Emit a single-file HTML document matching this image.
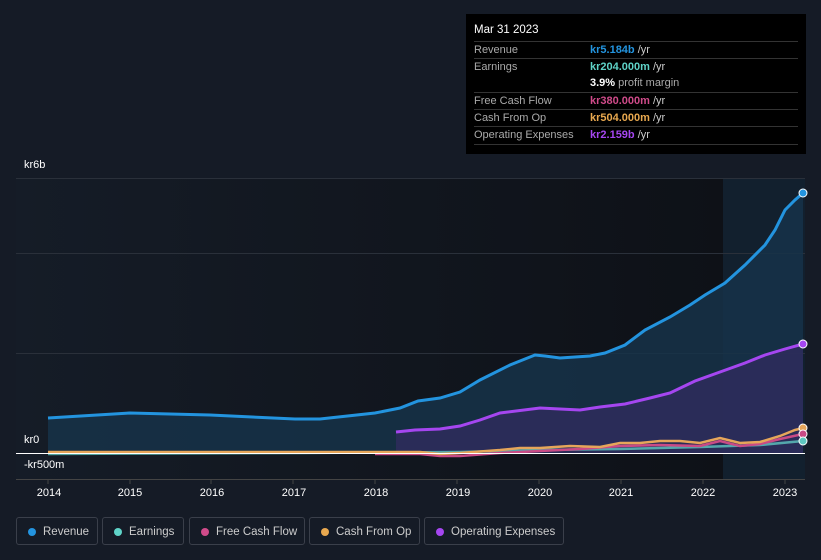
<!DOCTYPE html>
<html><head><style>
body{margin:0;width:821px;height:560px;background:#151b26;font-family:"Liberation Sans",sans-serif;overflow:hidden;position:relative}
.tt{position:absolute;left:466px;top:14px;width:340px;height:140px;background:#000;color:#fff;font-size:11px}
.tt .h{position:absolute;left:8px;top:10px;font-size:11.5px}
.row{position:absolute;left:8px;width:324px;border-top:1px solid #333;height:17px;line-height:17px;color:#aaa}
.row span{position:absolute;left:116px}
.leg{position:absolute;top:517px;height:28px;border:1px solid #3a3f4a;border-radius:3px;color:#ccc;font-size:11.5px;line-height:28px;box-sizing:border-box;padding-left:26px}
.leg i{position:absolute;left:11px;top:10px;width:8px;height:8px;border-radius:50%}
.ax{position:absolute;color:#fff;font-size:11px}
</style></head><body>
<svg width="821" height="560" style="position:absolute;left:0;top:0">
<defs>
<linearGradient id="bg" x1="0" x2="1"><stop offset="0" stop-color="#151c27"/><stop offset="1" stop-color="#0e1117"/></linearGradient>
<linearGradient id="rv" x1="0" y1="0" x2="0" y2="1"><stop offset="0" stop-color="#1c5e8c" stop-opacity=".7"/><stop offset="1" stop-color="#1a3a55" stop-opacity=".5"/></linearGradient>
</defs>
<rect x="16" y="178" width="707" height="302" fill="url(#bg)"/>
<rect x="723" y="178" width="82" height="302" fill="#12202e"/>
<g stroke="#2a303a" stroke-width="1"><line x1="16" y1="178.5" x2="805" y2="178.5"/><line x1="16" y1="253.5" x2="805" y2="253.5"/><line x1="16" y1="353.5" x2="805" y2="353.5"/><line x1="16" y1="479.5" x2="805" y2="479.5" stroke="#444"/></g>
<path d="M48,418 L130,413 L210,415 L295,419 L320,419 L375,413 L400,408 L418,401 L440,398 L460,392 L480,380 L510,365 L535,355 L545,356 L560,358 L590,356 L605,353 L625,345 L645,330 L670,317 L690,305 L705,295 L725,283 L745,265 L765,245 L775,230 L785,210 L795,200 L803,193 L803,453 L48,453Z" fill="#163249" opacity=".85"/>
<path d="M396,432 L415,430 L440,429 L460,426 L480,420 L500,413 L540,408 L560,409 L580,410 L600,407 L625,404 L650,398 L670,393 L695,381 L720,372 L745,363 L765,355 L785,349 L803,344 L803,453 L396,453Z" fill="#2f2c5e" opacity=".8"/>
<path d="M48,418 L130,413 L210,415 L295,419 L320,419 L375,413 L400,408 L418,401 L440,398 L460,392 L480,380 L510,365 L535,355 L545,356 L560,358 L590,356 L605,353 L625,345 L645,330 L670,317 L690,305 L705,295 L725,283 L745,265 L765,245 L775,230 L785,210 L795,200 L803,193" fill="none" stroke="#2394df" stroke-width="3"/>
<path d="M396,432 L415,430 L440,429 L460,426 L480,420 L500,413 L540,408 L560,409 L580,410 L600,407 L625,404 L650,398 L670,393 L695,381 L720,372 L745,363 L765,355 L785,349 L803,344" fill="none" stroke="#a546f0" stroke-width="3"/>
<path d="M48,454 L300,453 L460,452 L540,450 L620,449 L700,447 L760,445 L803,441" fill="none" stroke="#5fc7c0" stroke-width="2.5" opacity=".8"/>
<path d="M375,454 L420,454 L440,456 L460,456 L500,453 L540,451 L580,449 L620,446 L660,445 L700,446 L720,441 L740,446 L760,444 L780,439 L803,434" fill="none" stroke="#c94a85" stroke-width="2.5"/>
<path d="M48,452 L375,452 L420,452 L440,454 L460,453 L500,450 L520,448 L540,448 L570,446 L600,447 L620,443 L640,443 L660,441 L680,441 L700,443 L720,438 L740,443 L760,442 L780,436 L795,430 L803,428" fill="none" stroke="#e6a65a" stroke-width="2.5"/>
<line x1="16" y1="453.5" x2="805" y2="453.5" stroke="#fff" stroke-width="1"/>
<circle cx="803" cy="193" r="4" fill="#2394df" stroke="#fff"/>
<circle cx="803" cy="344" r="4" fill="#a546f0" stroke="#fff"/>
<circle cx="803" cy="428" r="4" fill="#e6a65a" stroke="#fff"/>
<circle cx="803" cy="434" r="4" fill="#c94a85" stroke="#fff"/>
<circle cx="803" cy="441" r="4" fill="#5fc7c0" stroke="#fff"/>
<g stroke="#444"><line x1="48" y1="480" x2="48" y2="484"/><line x1="130" y1="480" x2="130" y2="484"/><line x1="211" y1="480" x2="211" y2="484"/><line x1="293" y1="480" x2="293" y2="484"/><line x1="375" y1="480" x2="375" y2="484"/><line x1="457" y1="480" x2="457" y2="484"/><line x1="539" y1="480" x2="539" y2="484"/><line x1="621" y1="480" x2="621" y2="484"/><line x1="703" y1="480" x2="703" y2="484"/><line x1="785" y1="480" x2="785" y2="484"/></g>
<g fill="#fff" font-size="11" text-anchor="middle" font-family="Liberation Sans"><text x="49" y="496">2014</text><text x="130" y="496">2015</text><text x="212" y="496">2016</text><text x="294" y="496">2017</text><text x="376" y="496">2018</text><text x="458" y="496">2019</text><text x="540" y="496">2020</text><text x="621" y="496">2021</text><text x="703" y="496">2022</text><text x="785" y="496">2023</text></g>
</svg>
<div class="ax" style="left:24px;top:159px">kr6b</div>
<div class="ax" style="left:24px;top:434px">kr0</div>
<div class="ax" style="left:24px;top:459px">-kr500m</div>
<div class="tt">
<div class="h">Mar 31 2023</div>
<div class="row" style="top:27px">Revenue<span style="color:#2394df;font-weight:bold">kr5.184b <b style="color:#ccc;font-weight:normal">/yr</b></span></div>
<div class="row" style="top:44px">Earnings<span style="color:#5fd3c8;font-weight:bold">kr204.000m <b style="color:#ccc;font-weight:normal">/yr</b></span></div>
<div class="row" style="top:61px;border-top:none"><span style="color:#fff;font-weight:bold">3.9% <b style="color:#aaa;font-weight:normal">profit margin</b></span></div>
<div class="row" style="top:78px">Free Cash Flow<span style="color:#d04b8a;font-weight:bold">kr380.000m <b style="color:#ccc;font-weight:normal">/yr</b></span></div>
<div class="row" style="top:95px">Cash From Op<span style="color:#e8a84f;font-weight:bold">kr504.000m <b style="color:#ccc;font-weight:normal">/yr</b></span></div>
<div class="row" style="top:112px;border-bottom:1px solid #333">Operating Expenses<span style="color:#a546f0;font-weight:bold">kr2.159b <b style="color:#ccc;font-weight:normal">/yr</b></span></div>
</div>
<div class="leg" style="left:16px;width:82px"><i style="background:#2394df"></i>Revenue</div>
<div class="leg" style="left:102px;width:82px"><i style="background:#5fd3c8"></i>Earnings</div>
<div class="leg" style="left:189px;width:116px"><i style="background:#d04b8a"></i>Free Cash Flow</div>
<div class="leg" style="left:309px;width:111px"><i style="background:#e8a84f"></i>Cash From Op</div>
<div class="leg" style="left:424px;width:140px"><i style="background:#a546f0"></i>Operating Expenses</div>
</body></html>
